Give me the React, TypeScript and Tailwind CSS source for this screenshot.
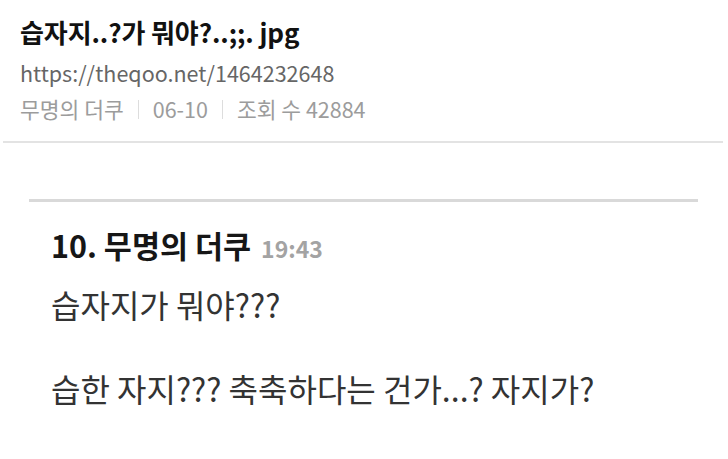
const font = { fontFamily: '"Noto Sans CJK KR", "Noto Sans", sans-serif' }

export default function App() {
    return (
        <div className="w-[728px] h-[459px] bg-white overflow-hidden" style={font}>
            {/* post head */}
            <div className="pl-5 pt-[14px]">
                <h1 className="text-[26px] leading-[36px] font-bold text-[#111] tracking-[-0.1px]">
                    습자지..?가 뭐야?..;;. jpg
                </h1>
                <div className="mt-[5px] text-[21.5px] leading-[36px] text-[#666]">
                    https://theqoo.net/1464232648
                </div>
                <div className="flex items-center text-[21.5px] leading-[36px] text-[#9c9c9c]">
                    <span>무명의 더쿠</span>
                    <span className="mx-[14px] h-[19px] w-px bg-[#ddd]" />
                    <span>06-10</span>
                    <span className="mx-[14px] h-[19px] w-px bg-[#ddd]" />
                    <span>조회 수 42884</span>
                </div>
            </div>
            <div className="mt-[14px] ml-[3px] mr-[5px] h-[2px] bg-[#e3e3e3]" />

            {/* comment */}
            <div className="mt-[56px] ml-[29px] mr-[30px] h-[3px] bg-[#d9d9d9]" />
            <div className="pl-[51px] pt-[23px]">
                <div className="flex items-baseline gap-[10px] leading-[40px]">
                    <span className="text-[30.5px] font-bold text-[#161616]">10. 무명의 더쿠</span>
                    <span className="text-[23px] font-semibold text-[#a3a3a3]">19:43</span>
                </div>
                <p className="mt-[14px] text-[32px] leading-[44px] text-[#333]">습자지가 뭐야???</p>
                <p className="mt-[40px] text-[32px] leading-[44px] text-[#333]">
                    습한 자지??? 축축하다는 건가...? 자지가?
                </p>
            </div>
        </div>
    )
}
